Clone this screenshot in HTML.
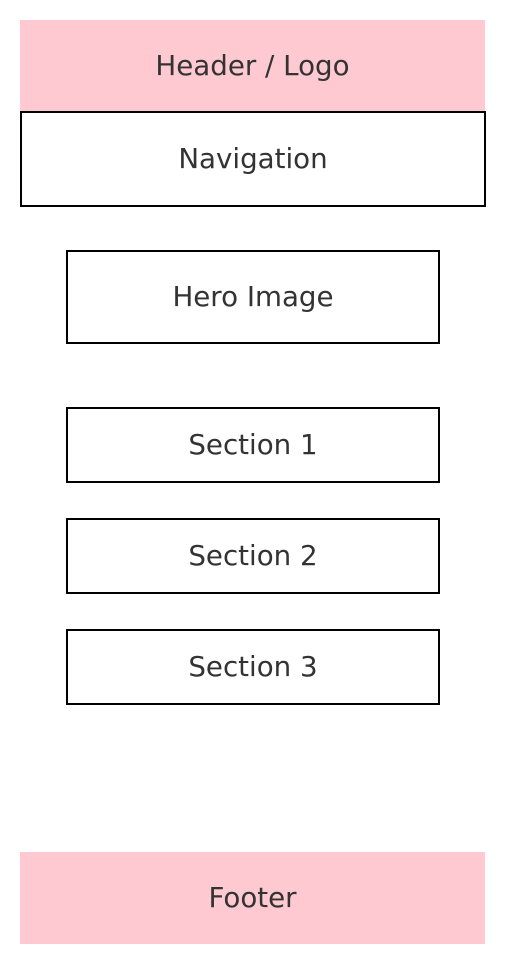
<!DOCTYPE html>
<html><head><meta charset="utf-8"><style>
body{margin:0;width:505px;height:964px;background:#fff;position:relative;font-family:"DejaVu Sans","Liberation Sans",sans-serif;font-size:27.7px;color:#333}
.b{position:absolute;display:flex;align-items:center;justify-content:center;box-sizing:border-box;padding-bottom:1px}
.p{background:#ffc9d1}
.k{border:2.5px solid #000}
</style></head><body>
<div class="b p" style="left:20px;top:20px;width:465px;height:92px">Header / Logo</div>
<div class="b k" style="left:20px;top:111px;width:466px;height:96px">Navigation</div>
<div class="b k" style="left:66px;top:250px;width:374px;height:94px">Hero Image</div>
<div class="b k" style="left:66px;top:407px;width:374px;height:76px">Section 1</div>
<div class="b k" style="left:66px;top:518px;width:374px;height:76px">Section 2</div>
<div class="b k" style="left:66px;top:629px;width:374px;height:76px">Section 3</div>
<div class="b p" style="left:20px;top:852px;width:465px;height:92px">Footer</div>
</body></html>
